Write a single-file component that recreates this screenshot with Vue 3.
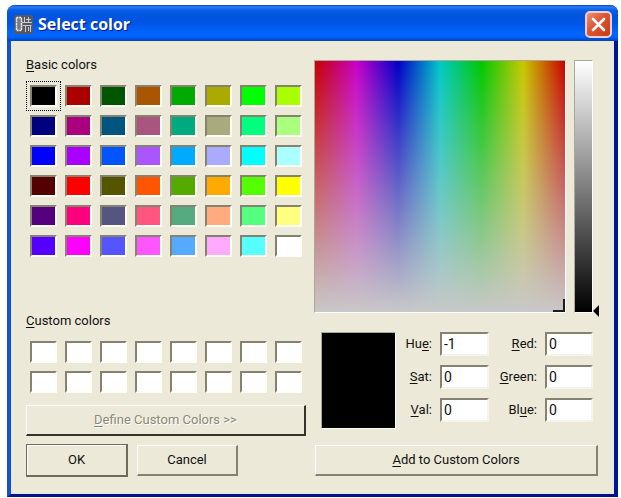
<script setup>
import { ref } from 'vue'

const basicColors = [
  '#000000', '#aa0000', '#005500', '#aa5500', '#00aa00', '#aaaa00', '#00ff00', '#aaff00',
  '#00007f', '#aa007f', '#00557f', '#aa557f', '#00aa7f', '#aaaa7f', '#00ff7f', '#aaff7f',
  '#0000ff', '#aa00ff', '#0055ff', '#aa55ff', '#00aaff', '#aaaaff', '#00ffff', '#aaffff',
  '#550000', '#ff0000', '#555500', '#ff5500', '#55aa00', '#ffaa00', '#55ff00', '#ffff00',
  '#55007f', '#ff007f', '#55557f', '#ff557f', '#55aa7f', '#ffaa7f', '#55ff7f', '#ffff7f',
  '#5500ff', '#ff00ff', '#5555ff', '#ff55ff', '#55aaff', '#ffaaff', '#55ffff', '#ffffff',
]
const customColors = ref(Array(16).fill('#ffffff'))
const selected = ref(0)
const current = ref('#000000')
const hue = ref('-1')
const sat = ref('0')
const val = ref('0')
const red = ref('0')
const green = ref('0')
const blue = ref('0')

function pick(index) {
  selected.value = index
  current.value = basicColors[index]
  const n = parseInt(current.value.slice(1), 16)
  red.value = String(n >> 16)
  green.value = String((n >> 8) & 255)
  blue.value = String(n & 255)
}

let nextCustom = 0
function addCustom() {
  customColors.value[nextCustom] = current.value
  nextCustom = (nextCustom + 1) % 16
}
</script>

<template>
  <main class="desktop">
    <section class="window">
      <header class="titlebar">
        <svg class="app-icon" viewBox="0 0 19 19">
          <rect width="19" height="19" rx="2" fill="#55585f" />
          <path d="M2 3h6v12H2z" fill="#777b84" />
          <path d="M2.500 2.500h5v13h-5z" fill="none" stroke="#eceef0" stroke-width="1.500" stroke-dasharray="2 0.600" />
          <path d="M10.500 2v5.500M8 7.500h10M12 4.500h5M14.500 2v5M8.500 10.500h9M11.500 10v7M16.500 10v7M14.500 12v4" fill="none" stroke="#c9ccd2" />
        </svg>
        <h1>Select color</h1>
        <button class="close" type="button" aria-label="Close">
          <svg viewBox="0 0 23 23"><path d="M6 6l11 11M17 6L6 17" stroke="#fff" stroke-width="2.600" stroke-linecap="round" /></svg>
        </button>
      </header>

      <div class="body">
        <div class="palette">
          <h2><u>B</u>asic colors</h2>
          <div class="grid">
            <button
              v-for="(color, i) in basicColors"
              :key="i"
              type="button"
              class="cell"
              :class="{ selected: i === selected }"
              :aria-label="color"
              @click="pick(i)"
            >
              <span class="swatch" :style="{ backgroundColor: color }"></span>
            </button>
          </div>
          <h2 class="custom-title"><u>C</u>ustom colors</h2>
          <div class="grid">
            <button
              v-for="(color, i) in customColors"
              :key="i"
              type="button"
              class="cell"
              :aria-label="color"
              @click="current = color"
            >
              <span class="swatch" :style="{ backgroundColor: color }"></span>
            </button>
          </div>
          <button class="btn define" type="button" disabled><span><u>D</u>efine Custom Colors &gt;&gt;</span></button>
          <div class="actions">
            <button class="btn ok" type="button">OK</button>
            <button class="btn cancel" type="button">Cancel</button>
          </div>
        </div>

        <div class="mixer">
          <div class="pickers">
            <div class="spectrum"><span class="cross"></span></div>
            <div class="value-bar"></div>
            <input v-model="val" class="value-slider" type="range" min="0" max="255" aria-label="Value" />
          </div>

          <div class="details">
            <div class="preview" :style="{ backgroundColor: current }"></div>
            <div class="fields">
              <label for="hue">Hu<u>e</u>:</label>
              <input id="hue" v-model="hue" type="text" />
              <label for="red"><u>R</u>ed:</label>
              <input id="red" v-model="red" type="text" />
              <label for="sat"><u>S</u>at:</label>
              <input id="sat" v-model="sat" type="text" />
              <label for="green"><u>G</u>reen:</label>
              <input id="green" v-model="green" type="text" />
              <label for="val"><u>V</u>al:</label>
              <input id="val" v-model="val" type="text" />
              <label for="blue">Bl<u>u</u>e:</label>
              <input id="blue" v-model="blue" type="text" />
            </div>
          </div>

          <div class="add-row">
            <button class="btn add" type="button" @click="addCustom"><span><u>A</u>dd to Custom Colors</span></button>
          </div>
        </div>
      </div>
    </section>
  </main>
</template>

<style>
body {
  background: #fff;
}
</style>

<style scoped>
* {
  box-sizing: border-box;
}
.desktop {
  padding: 5px 3px 2px 7px;
  font: 13px/16px Roboto, "Liberation Sans", sans-serif;
  color: #111;
}
.window {
  background: #ece9d8;
  border: solid;
  border-width: 0 4px 3px;
  border-color: #0831d9 #001590 #00138c #1350d8;
  border-radius: 8px 8px 0 0;
  min-width: 600px;
}
.titlebar {
  display: flex;
  align-items: center;
  height: 36px;
  margin: 0 -4px;
  padding: 2px 6px 0 7px;
  border-radius: 8px 8px 0 0;
  background: linear-gradient(#0a48c8 0, #2a7cf4 2px, #0a5fe8 5px, #0054e0 10px, #0055e5 18px, #0066ff 28px, #0063f8 32px, #0040c0 36px);
}
.app-icon {
  width: 19px;
  height: 19px;
  margin-right: 5px;
}
h1 {
  flex: 1;
  margin: 0;
  font: bold 16px/20px "Open Sans", "Noto Sans", sans-serif;
  color: #fff;
  text-shadow: 1px 1px 1px #0a1883;
}
.close {
  display: flex;
  width: 27px;
  height: 27px;
  padding: 0;
  border: 2px solid #e8cfd8;
  border-radius: 5px;
  background: linear-gradient(135deg, #ec9078, #dd5530 45%, #c83c12);
}
.close svg {
  width: 23px;
  height: 23px;
}
.body {
  display: flex;
  gap: 8px;
  padding: 16px 14px 16px 15px;
  border: solid #dfe8f4;
  border-width: 0 1px 1px 0;
}
.palette {
  flex: none;
  width: 280px;
}
h2 {
  margin: 0 0 8px;
  font: inherit;
}
u {
  text-decoration: underline;
  text-underline-offset: 2px;
}
.grid {
  display: grid;
  grid-template-columns: repeat(8, 35px);
}
.cell {
  display: block;
  height: 30px;
  padding: 3px;
  border: 1px solid transparent;
  background: none;
}
.cell.selected {
  border: 1px dotted #000;
}
.swatch {
  display: block;
  height: 22px;
  border: 2px solid;
  border-color: #85826f #fffef4 #fffef4 #85826f;
}
.custom-title {
  margin-top: 52px;
}
.btn {
  display: block;
  height: 31px;
  padding: 0;
  font: inherit;
  color: #111;
  background: #ece9d8;
  border: solid;
  border-width: 1px 2px 2px 1px;
  border-color: #fff #85826f #85826f #fff;
}
.define {
  width: 100%;
  margin: 8px 0;
  color: #8a8878;
  border-color: #fff #35332a #35332a #fff;
  text-shadow: 1px 1px 0 #fff;
}
.actions {
  display: flex;
  align-items: center;
  gap: 9px;
}
.ok {
  width: 102px;
  height: 33px;
  border-color: #6e6b5c;
  box-shadow: inset 1px 1px 0 #fff;
}
.cancel {
  width: 101px;
}
.mixer {
  flex: 1;
  margin-top: 3px;
}
.pickers {
  display: flex;
  height: 253px;
}
.spectrum {
  position: relative;
  flex: 1;
  margin-right: 8px;
  border: 1px solid;
  border-color: #aca899 #fff #fff #aca899;
  background:
    linear-gradient(rgba(200, 200, 200, 0), #c8c8c8),
    linear-gradient(90deg, #c80000, #c800c8, #0000c8, #00c8c8, #00c800, #c8c800, #c80000);
}
.cross {
  position: absolute;
  right: 0;
  bottom: 0;
  width: 12px;
  height: 13px;
  border: solid #1c1c1c;
  border-width: 0 2px 2px 0;
}
.value-bar {
  width: 19px;
  border: 1px solid;
  border-color: #aca899 #fff #fff #aca899;
  background: linear-gradient(#fff, #000);
}
.value-slider {
  appearance: none;
  writing-mode: vertical-lr;
  direction: rtl;
  width: 6px;
  height: 262px;
  margin: -5px 0 0;
  background: none;
}
.value-slider::-webkit-slider-thumb {
  appearance: none;
  width: 6px;
  height: 12px;
  background: #000;
  clip-path: polygon(0 50%, 100% 0, 100% 100%);
}
.details {
  display: flex;
  justify-content: space-between;
  margin: 19px 6px 16px 7px;
}
.preview {
  width: 75px;
  height: 97px;
  border: 1px solid;
  border-color: #aca899 #fff #fff #aca899;
}
.fields {
  display: grid;
  grid-template-columns: max-content 49px 40px 48px;
  grid-auto-rows: 24px;
  align-items: center;
  gap: 9px 8px;
  height: 90px;
}
.fields label {
  text-align: right;
}
.fields input {
  width: 100%;
  height: 24px;
  padding: 0 2px;
  font: inherit;
  font-size: 14px;
  color: #111;
  background: #fff;
  border: 2px solid;
  border-color: #85826f #f6f4ea #f6f4ea #85826f;
}
.add-row {
  padding: 0 1px;
}
.add {
  width: 100%;
}
</style>
